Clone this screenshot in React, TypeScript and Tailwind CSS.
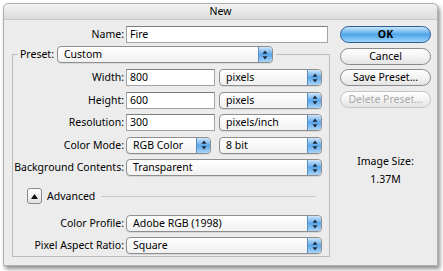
import React from 'react';

const font = { fontFamily: '"Lucida Grande", "Noto Sans", sans-serif' };

function Stepper() {
  return (
    <div className="flex h-full w-[14px] shrink-0 flex-col items-center justify-center rounded-r-[4px] border-l border-[#5a8cc4] bg-gradient-to-b from-[#cfe6fb] via-[#5aa7ea] to-[#a8d4f7]">
      <svg width="6" height="10" viewBox="0 0 6 10">
        <path d="M3 0.5 L5.5 3.8 L0.5 3.8 Z" fill="#1d2a3a" />
        <path d="M3 9.5 L5.5 6.2 L0.5 6.2 Z" fill="#1d2a3a" />
      </svg>
    </div>
  );
}

function Select({ value, className }: { value: string; className: string }) {
  return (
    <div
      className={`flex h-[17px] items-center overflow-hidden rounded-[4px] border border-[#8e8e8e] bg-gradient-to-b from-white to-[#f1f1f1] shadow-[0_1px_0_rgba(0,0,0,0.08)] ${className}`}
    >
      <span className="flex-1 whitespace-nowrap pl-[6px] text-[10.5px] leading-[15px] text-black">{value}</span>
      <Stepper />
    </div>
  );
}

function Input({ value, className }: { value: string; className: string }) {
  return (
    <div
      className={`flex h-[17px] items-center border border-[#a3a3a3] border-t-[#7d7d7d] bg-white pl-[3px] text-[10.5px] leading-[15px] text-black ${className}`}
    >
      {value}
    </div>
  );
}

function Row({ label, children }: { label: string; children: React.ReactNode }) {
  return (
    <div className="flex h-[17px] items-center">
      <span className="w-[113px] shrink-0 whitespace-nowrap pr-[2px] text-right text-[10.5px] leading-[15px] text-black">
        {label}
      </span>
      {children}
    </div>
  );
}

function AquaButton({ label, primary, disabled }: { label: string; primary?: boolean; disabled?: boolean }) {
  const base =
    'flex h-[17px] w-[91px] items-center justify-center whitespace-nowrap rounded-full border text-[10.5px] leading-[15px]';
  if (primary) {
    return (
      <div className={`${base} border-[#2e5f93] bg-gradient-to-b from-[#c6e6fb] via-[#4ea5ea] to-[#9bd3f9] font-bold text-black`}>
        {label}
      </div>
    );
  }
  return (
    <div
      className={`${base} bg-gradient-to-b from-white via-[#f3f3f3] to-[#e4e4e4] ${
        disabled ? 'border-[#c4c4c4] text-[#a9a9a9]' : 'border-[#8a8a8a] text-black'
      }`}
    >
      {label}
    </div>
  );
}

export default function App() {
  return (
    <div className="h-[271px] w-[443px] overflow-hidden bg-white pl-[3px] pt-[3px]" style={font}>
      <div className="flex h-[263px] w-[435px] flex-col rounded-t-[5px] border border-[#b0b0b0] bg-[#ececec] shadow-[2px_3px_4px_rgba(0,0,0,0.45)]">
        {/* Title bar */}
        <div className="flex h-[16px] items-center justify-center rounded-t-[5px] border-b border-[#c9c9c9] bg-gradient-to-b from-[#f2f2f2] to-[#dcdcdc] text-[10.5px] leading-[15px] text-black">
          New
        </div>

        <div className="flex flex-1">
          {/* Left side */}
          <div className="w-[328px] pt-[6px]">
            <div className="flex h-[17px] items-center">
              <span className="w-[122px] pr-[2px] text-right text-[10.5px] leading-[15px] text-black">Name:</span>
              <Input value="Fire" className="w-[202px]" />
            </div>

            <fieldset className="ml-[8px] mt-[3px] h-[211px] w-[318px] border border-[#bdbdbd] px-0 pb-0 pt-0">
              <legend className="ml-[5px] flex items-center pr-[3px]">
                <span className="pl-[2px] pr-[3px] text-[10.5px] leading-[15px] text-black">Preset:</span>
                <Select value="Custom" className="w-[216px]" />
              </legend>

              <div className="flex flex-col gap-[5.5px] pt-[6px]">
                <Row label="Width:">
                  <Input value="800" className="w-[89px]" />
                  <Select value="pixels" className="ml-[4px] w-[103px]" />
                </Row>
                <Row label="Height:">
                  <Input value="600" className="w-[89px]" />
                  <Select value="pixels" className="ml-[4px] w-[103px]" />
                </Row>
                <Row label="Resolution:">
                  <Input value="300" className="w-[89px]" />
                  <Select value="pixels/inch" className="ml-[4px] w-[103px]" />
                </Row>
                <Row label="Color Mode:">
                  <Select value="RGB Color" className="w-[85px]" />
                  <Select value="8 bit" className="ml-[8px] w-[103px]" />
                </Row>
                <Row label="Background Contents:">
                  <Select value="Transparent" className="w-[196px]" />
                </Row>
              </div>

              <div className="mt-[12px] flex items-center pl-[14px]">
                <div className="flex h-[16px] w-[15px] items-center justify-center rounded-[3px] border border-[#8a8a8a] bg-gradient-to-b from-white to-[#e2e2e2]">
                  <svg width="7" height="5" viewBox="0 0 7 5">
                    <path d="M3.5 0 L7 5 L0 5 Z" fill="#111" />
                  </svg>
                </div>
                <span className="ml-[5px] text-[10.5px] leading-[15px] text-black">Advanced</span>
                <div className="ml-[6px] mr-[13px] h-px flex-1 bg-[#c9c9c9]" />
              </div>

              <div className="mt-[11px] flex flex-col gap-[5px]">
                <Row label="Color Profile:">
                  <Select value="Adobe RGB (1998)" className="w-[196px]" />
                </Row>
                <Row label="Pixel Aspect Ratio:">
                  <Select value="Square" className="w-[196px]" />
                </Row>
              </div>
            </fieldset>
          </div>

          {/* Right side */}
          <div className="ml-[8px] flex flex-col pt-[6px]">
            <div className="flex flex-col gap-[4.5px]">
              <AquaButton label="OK" primary />
              <AquaButton label="Cancel" />
              <AquaButton label="Save Preset..." />
              <AquaButton label="Delete Preset..." disabled />
            </div>
            <div className="mt-[46px] flex flex-col items-center text-[10.5px] leading-[15px] text-black">
              <span>Image Size:</span>
              <span className="mt-[3px]">1.37M</span>
            </div>
          </div>
        </div>
      </div>
    </div>
  );
}
